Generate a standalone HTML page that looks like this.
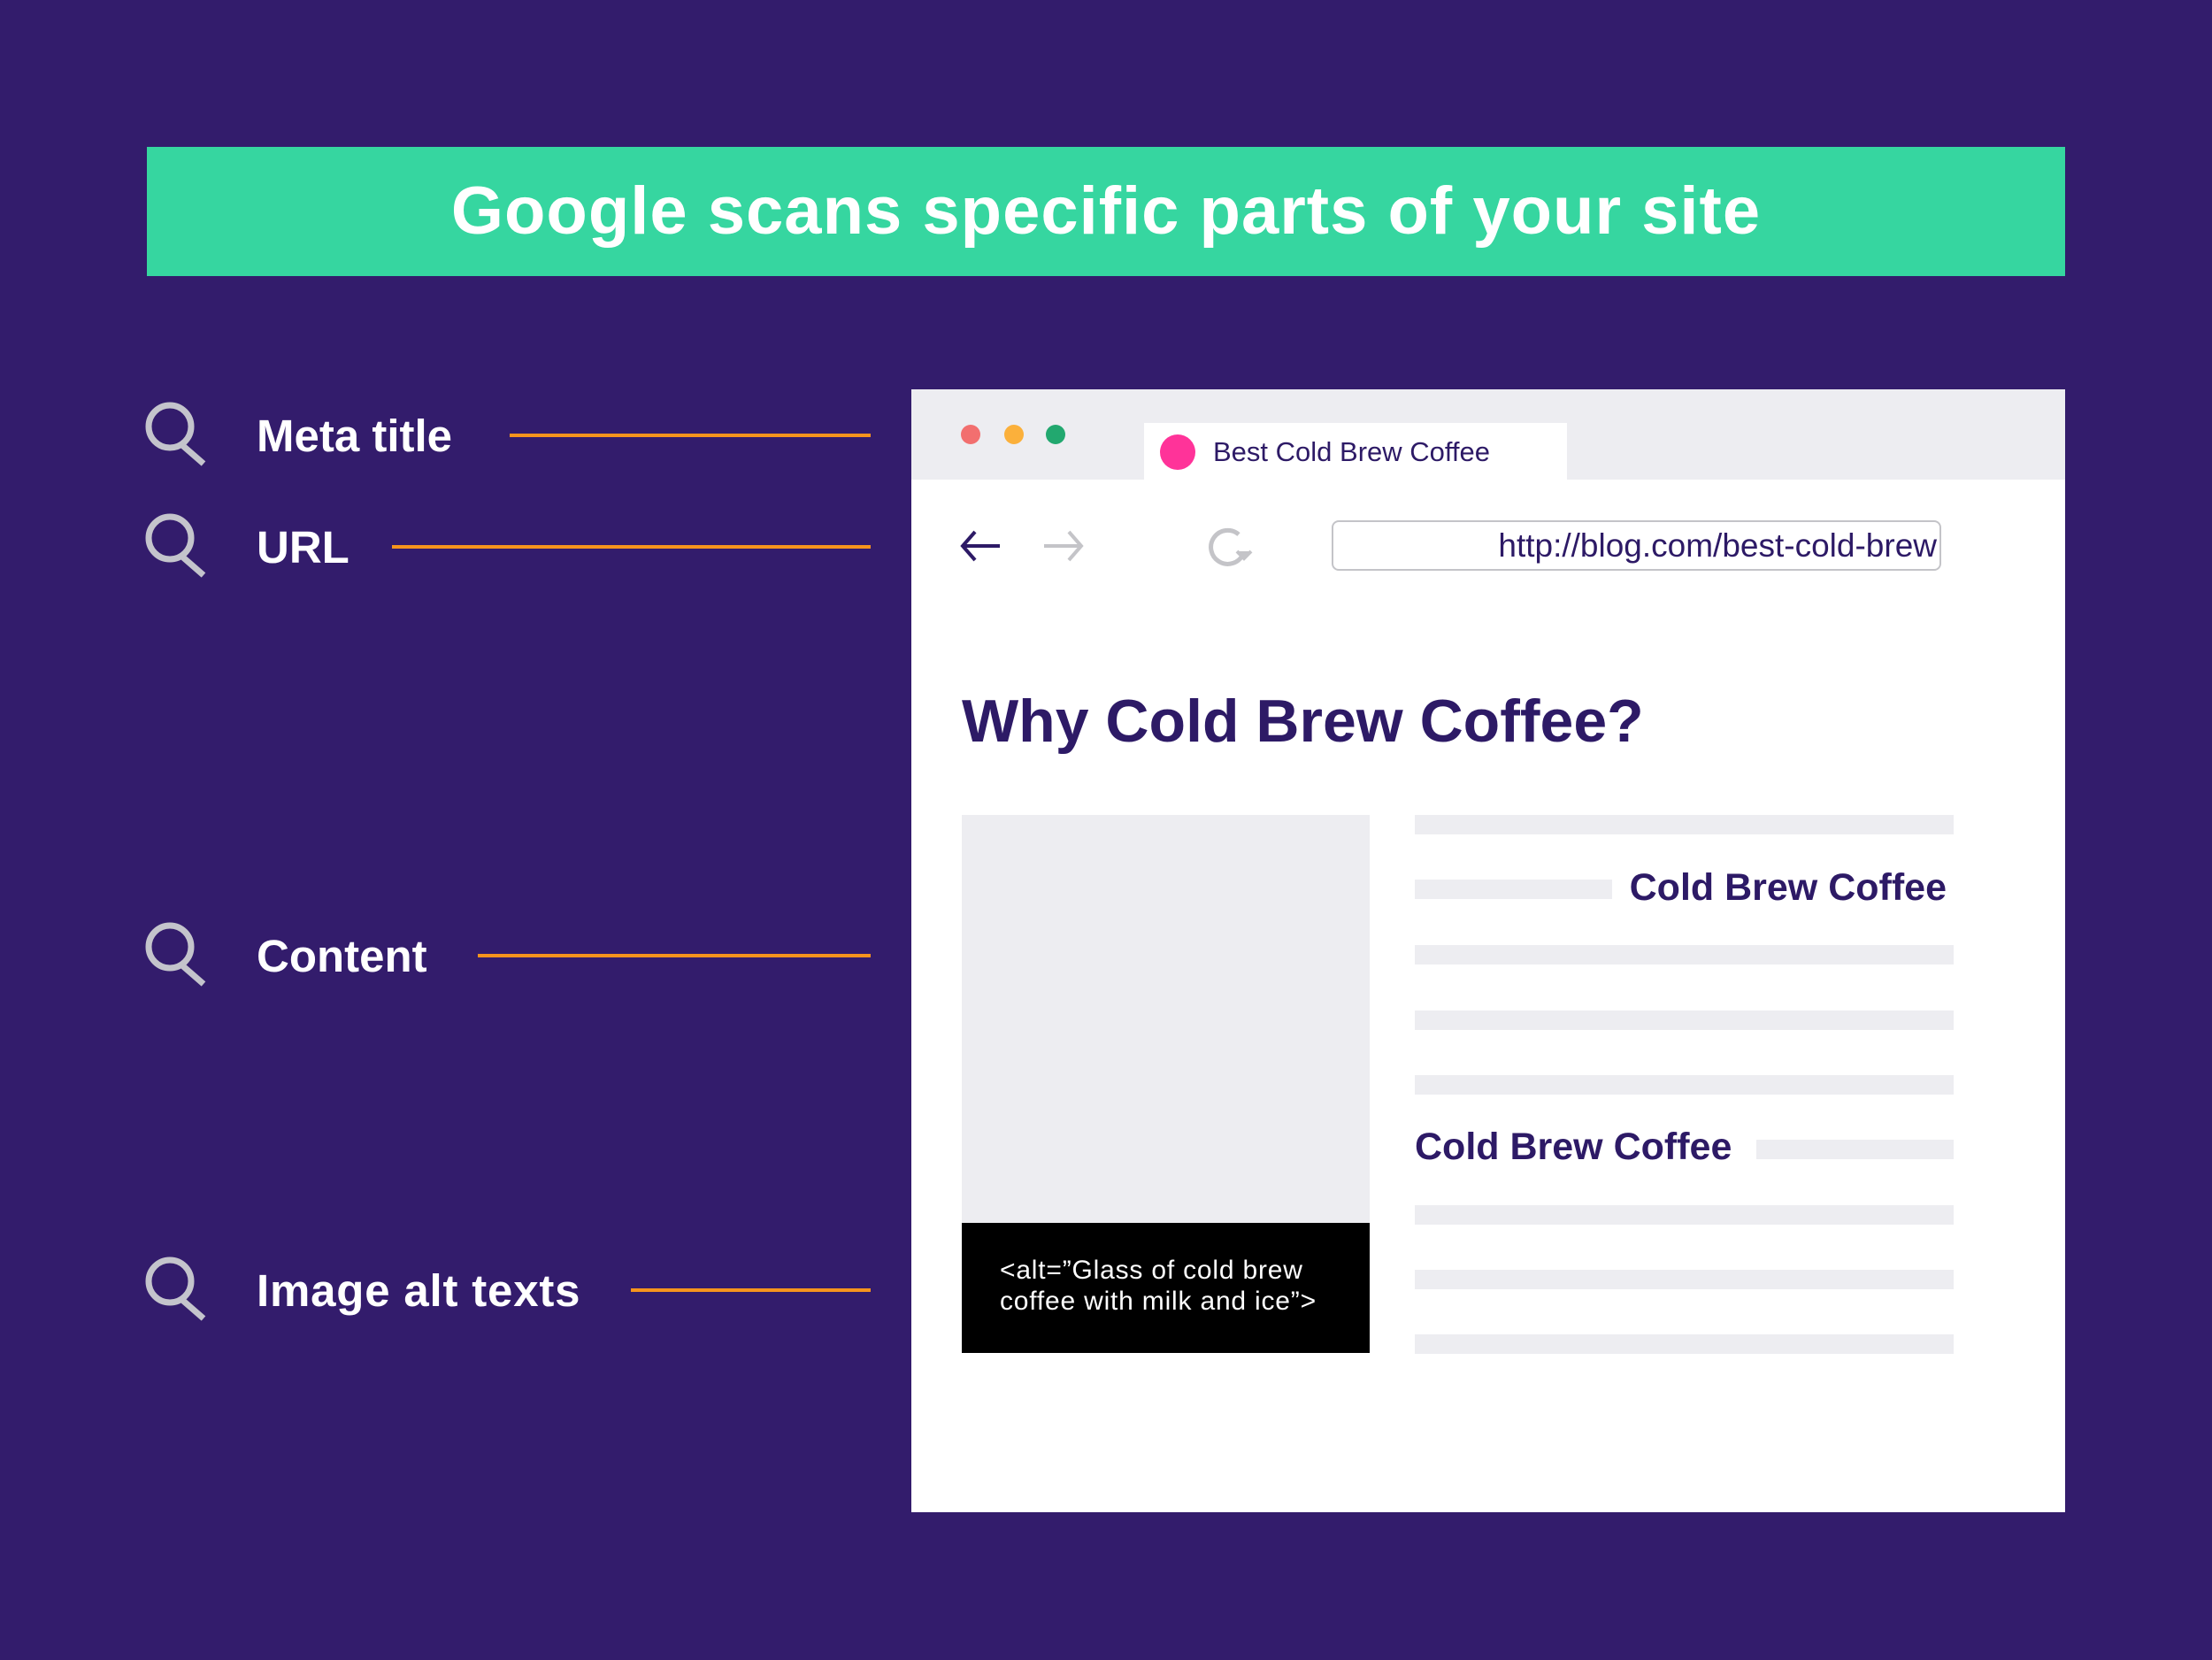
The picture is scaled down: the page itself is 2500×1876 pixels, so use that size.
<!DOCTYPE html>
<html><head><meta charset="utf-8"><style>
body{margin:0;width:2500px;height:1876px;background:#331c6c;position:relative;overflow:hidden;font-family:"Liberation Sans",sans-serif}
.a{position:absolute}
.lab{position:absolute;left:290px;color:#fff;font-weight:bold;font-size:51px;line-height:60px;letter-spacing:0px}
.ln{position:absolute;height:4px;background:#f7941d;right:1516px}
.bar{position:absolute;background:#ededf1;height:22px}
</style></head><body>
<div class="a" style="left:166px;top:166px;width:2168px;height:146px;background:#36d6a0;color:#fff;font-weight:bold;font-size:76px;line-height:146px;text-align:center;letter-spacing:1px">Google scans specific parts of your site</div>

<svg class="a" style="left:0;top:0" width="400" height="1876">
<g fill="none" stroke="#c4c4cc" stroke-width="7">
<g id="m"><circle cx="192" cy="482" r="24"/><path d="M207 504 L230 524"/></g>
<use href="#m" y="126"/><use href="#m" y="588"/><use href="#m" y="966"/>
</g></svg>
<div class="lab" style="top:463px">Meta title</div>
<div class="lab" style="top:589px">URL</div>
<div class="lab" style="top:1051px">Content</div>
<div class="lab" style="top:1429px;letter-spacing:0.8px">Image alt texts</div>
<div class="ln" style="left:576px;top:490px"></div>
<div class="ln" style="left:443px;top:616px"></div>
<div class="ln" style="left:540px;top:1078px"></div>
<div class="ln" style="left:713px;top:1456px"></div>

<div class="a" style="left:1030px;top:440px;width:1304px;height:1269px;background:#fff"></div>
<div class="a" style="left:1030px;top:440px;width:1304px;height:102px;background:#ededf1"></div>
<div class="a" style="left:1086px;top:480px;width:22px;height:22px;border-radius:50%;background:#f26f6f"></div>
<div class="a" style="left:1135px;top:480px;width:22px;height:22px;border-radius:50%;background:#fbb03b"></div>
<div class="a" style="left:1182px;top:480px;width:22px;height:22px;border-radius:50%;background:#22a86f"></div>
<div class="a" style="left:1293px;top:478px;width:478px;height:64px;background:#fff"></div>
<div class="a" style="left:1311px;top:491px;width:40px;height:40px;border-radius:50%;background:#ff3399"></div>
<div class="a" style="left:1371px;top:491px;color:#2d1a66;font-size:31px;line-height:40px">Best Cold Brew Coffee</div>
<svg class="a" style="left:1080px;top:590px" width="340" height="60" fill="none" stroke-width="4">
<path d="M50 27 H8 M22 11 L8 27 L22 43" stroke="#2d1a66"/>
<path d="M100 27 H142 M128 11 L142 27 L128 43" stroke="#c4c4c8"/>
<path d="M325 36 A19 19 0 1 1 320 14" stroke="#c4c4c8" stroke-width="5"/>
<path d="M318 33 L326 41 L334 33" stroke="#c4c4c8" fill="#c4c4c8"/>
</svg>
<div class="a" style="left:1505px;top:588px;width:689px;height:57px;border:2px solid #c4c4c8;border-radius:8px;box-sizing:border-box"></div>
<div class="a" style="left:1505px;width:684px;top:592px;text-align:right;color:#2d1a66;font-size:37px;line-height:50px">http://blog.com/best-cold-brew</div>
<div class="a" style="left:1087px;top:770px;color:#2d1a66;font-weight:bold;font-size:68px;line-height:90px">Why Cold Brew Coffee?</div>
<div class="a" style="left:1087px;top:921px;width:461px;height:461px;background:#ededf1"></div>
<div class="a" style="left:1087px;top:1382px;width:461px;height:147px;background:#000"></div>
<div class="a" style="left:1130px;top:1418px;color:#fff;font-size:30px;line-height:35px;letter-spacing:0.8px">&lt;alt=”Glass of cold brew<br>coffee with milk and ice”&gt;</div>
<div class="bar" style="left:1599px;width:609px;top:921px"></div>
<div class="bar" style="left:1599px;width:223px;top:994px"></div>
<div class="a" style="right:300px;top:977px;color:#2d1a66;font-weight:bold;font-size:43px;line-height:52px">Cold Brew Coffee</div>
<div class="bar" style="left:1599px;width:609px;top:1068px"></div>
<div class="bar" style="left:1599px;width:609px;top:1142px"></div>
<div class="bar" style="left:1599px;width:609px;top:1215px"></div>
<div class="a" style="left:1599px;top:1270px;color:#2d1a66;font-weight:bold;font-size:43px;line-height:52px">Cold Brew Coffee</div>
<div class="bar" style="left:1985px;width:223px;top:1288px"></div>
<div class="bar" style="left:1599px;width:609px;top:1362px"></div>
<div class="bar" style="left:1599px;width:609px;top:1435px"></div>
<div class="bar" style="left:1599px;width:609px;top:1508px"></div>
</body></html>
